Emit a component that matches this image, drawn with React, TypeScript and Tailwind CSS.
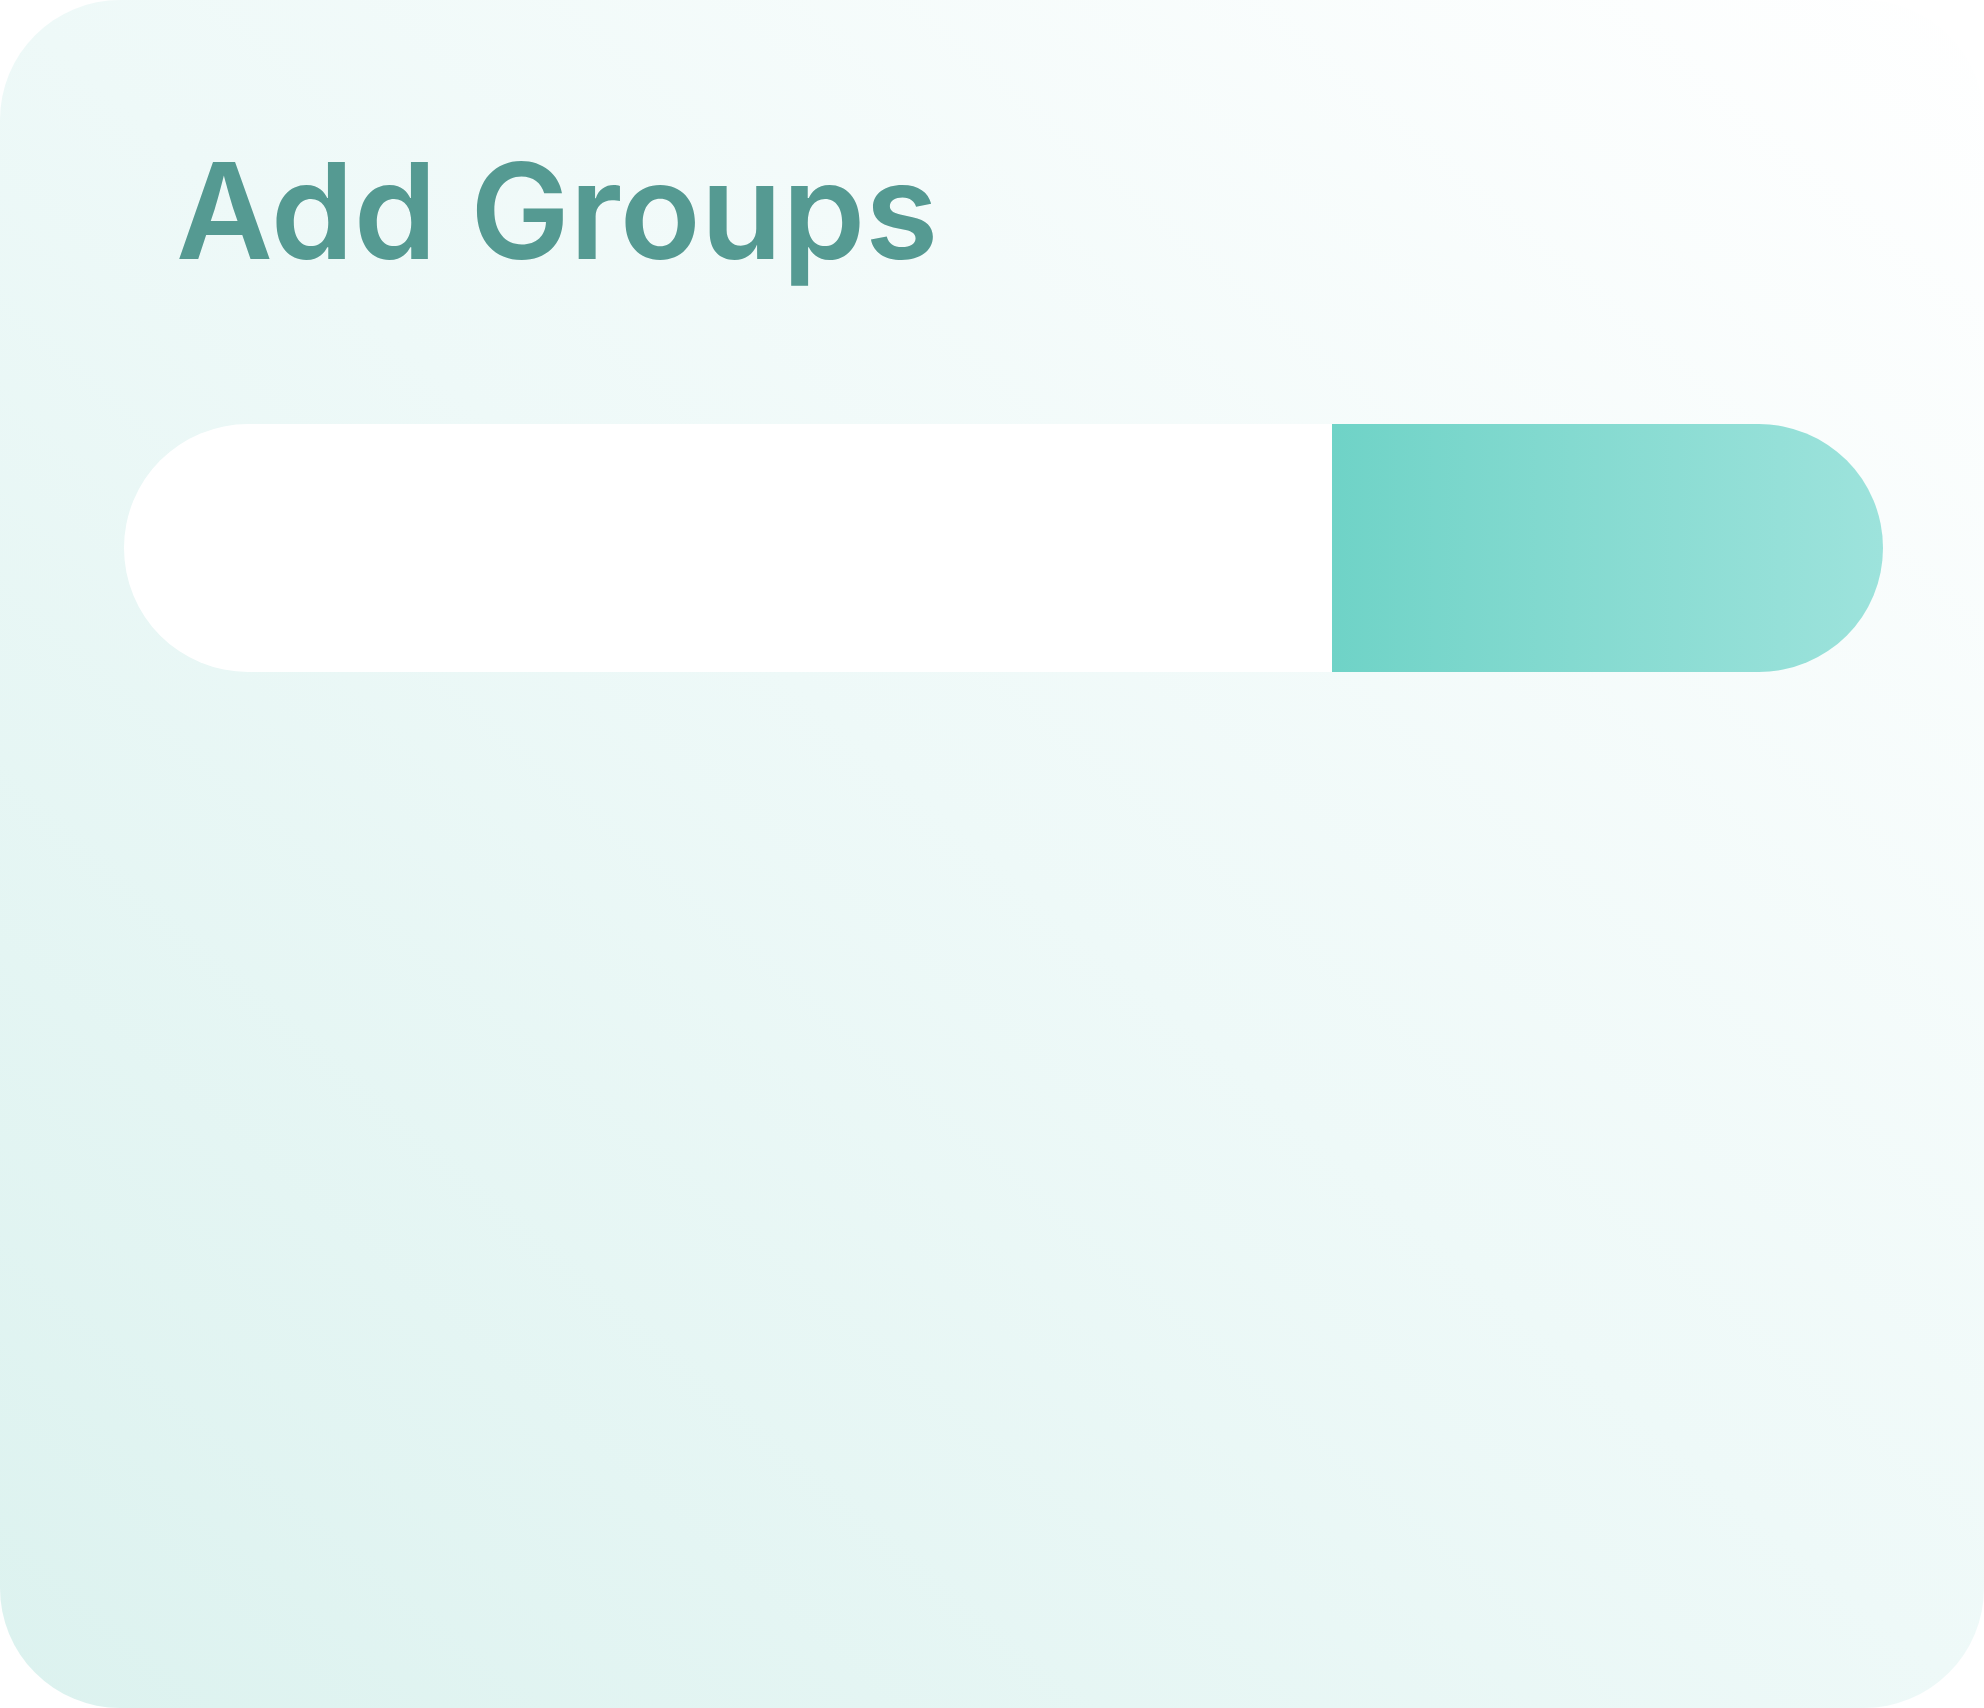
export default function App() {
  return (
    <div className="w-[1984px] h-[1708px] bg-white">
      <div className="w-full h-full rounded-[120px] bg-linear-to-tr from-[#dcf2ef] via-[#eef9f8] to-[#ffffff] pl-[124px] pr-[101px] pt-[144px]">
        <h1
          className="pl-[52px] text-[133px] leading-none font-semibold text-[#559a92] whitespace-nowrap"
          style={{ fontFamily: 'Inter, sans-serif' }}
        >
          Add Groups
        </h1>
        <div className="mt-[147px] flex h-[248px]">
          <div className="flex-1 bg-white rounded-l-full" />
          <div className="w-[551px] rounded-r-full bg-linear-to-r from-[#6fd3c7] to-[#9de3dc]" />
        </div>
      </div>
    </div>
  );
}
